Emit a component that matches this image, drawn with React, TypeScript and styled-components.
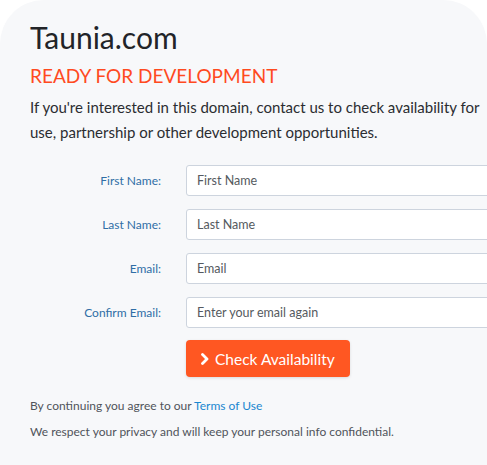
import styled, { createGlobalStyle } from "styled-components";

const GlobalStyle = createGlobalStyle`
  html, body {
    margin: 0;
    padding: 0;
    background: #ffffff;
    overflow: hidden;
  }
  body {
    font-family: Lato, "Noto Sans", sans-serif;
  }
`

const Card = styled.div`
  width: 487px;
  height: 465px;
  box-sizing: border-box;
  background-color: #f7f8fa;
  border-radius: 44px 44px 0 0;
  padding: 17px 0 0 30px;
`

const Title = styled.h1`
  margin: 0;
  font-size: 30px;
  font-weight: 400;
  color: #222428;
  line-height: 40px;
`

const Tagline = styled.h2`
  margin: 6px 0 0;
  font-size: 19px;
  font-weight: 400;
  color: #ff4a1f;
  line-height: 26px;
`

const Intro = styled.p`
  margin: 6px 0 0;
  font-size: 15px;
  line-height: 25px;
  color: #2b2d31;
  white-space: nowrap;
`

const Form = styled.form`
  margin-top: 20px;
  display: grid;
  grid-template-columns: 131px 330px;
  column-gap: 25px;
  row-gap: 13px;
  align-items: center;
`

const Label = styled.label`
  text-align: right;
  font-size: 12px;
  color: #2f6ea6;
`

const Input = styled.input`
  box-sizing: border-box;
  height: 31px;
  width: 100%;
  border: 1px solid #cdd4de;
  border-radius: 3px;
  background: #ffffff;
  padding: 0 10px;
  font-family: inherit;
  font-size: 12.5px;
  color: #333;
  &::placeholder {
    color: #555a60;
  }
`

const Actions = styled.div`
  grid-column: 2;
  margin-top: -1px;
`

const Button = styled.button`
  display: inline-flex;
  align-items: center;
  gap: 5px;
  height: 37px;
  padding: 0 15px 0 14px;
  border: none;
  border-radius: 4px;
  background-color: #ff5722;
  color: #ffffff;
  font-family: inherit;
  font-size: 15.5px;
  box-shadow: 0 1px 3px rgba(0, 0, 0, 0.12);
  cursor: pointer;
`

const Notes = styled.div`
  margin-top: 16px;
`

const Note = styled.p`
  margin: 0;
  font-size: 12px;
  line-height: 26px;
  color: #50545a;
`

const Link = styled.a`
  color: #1a87d0;
  text-decoration: none;
`

const Chevron = () => (
  <svg width="10" height="12" viewBox="0 0 10 12" aria-hidden="true">
    <path d="M2.5 1.5 L7 6 L2.5 10.5" fill="none" stroke="#fff" strokeWidth="2.8" strokeLinecap="round" strokeLinejoin="round" />
  </svg>
);

const fields = [
  { label: "First Name:", placeholder: "First Name" },
  { label: "Last Name:", placeholder: "Last Name" },
  { label: "Email:", placeholder: "Email" },
  { label: "Confirm Email:", placeholder: "Enter your email again" },
];

const App = () => {
  return (
    <>
      <GlobalStyle />
      <Card>
        <Title>Taunia.com</Title>
        <Tagline>READY FOR DEVELOPMENT</Tagline>
        <Intro>
          If you're interested in this domain, contact us to check availability for
          <br />
          use, partnership or other development opportunities.
        </Intro>
        <Form onSubmit={(e) => e.preventDefault()}>
          {fields.map((f) => [
            <Label key={f.label + "-l"}>{f.label}</Label>,
            <Input key={f.label + "-i"} placeholder={f.placeholder} />,
          ])}
          <Actions>
            <Button type="submit">
              <Chevron />
              Check Availability
            </Button>
          </Actions>
        </Form>
        <Notes>
          <Note>
            By continuing you agree to our <Link href="#">Terms of Use</Link>
          </Note>
          <Note>We respect your privacy and will keep your personal info confidential.</Note>
        </Notes>
      </Card>
    </>
  );
}

export default App;
